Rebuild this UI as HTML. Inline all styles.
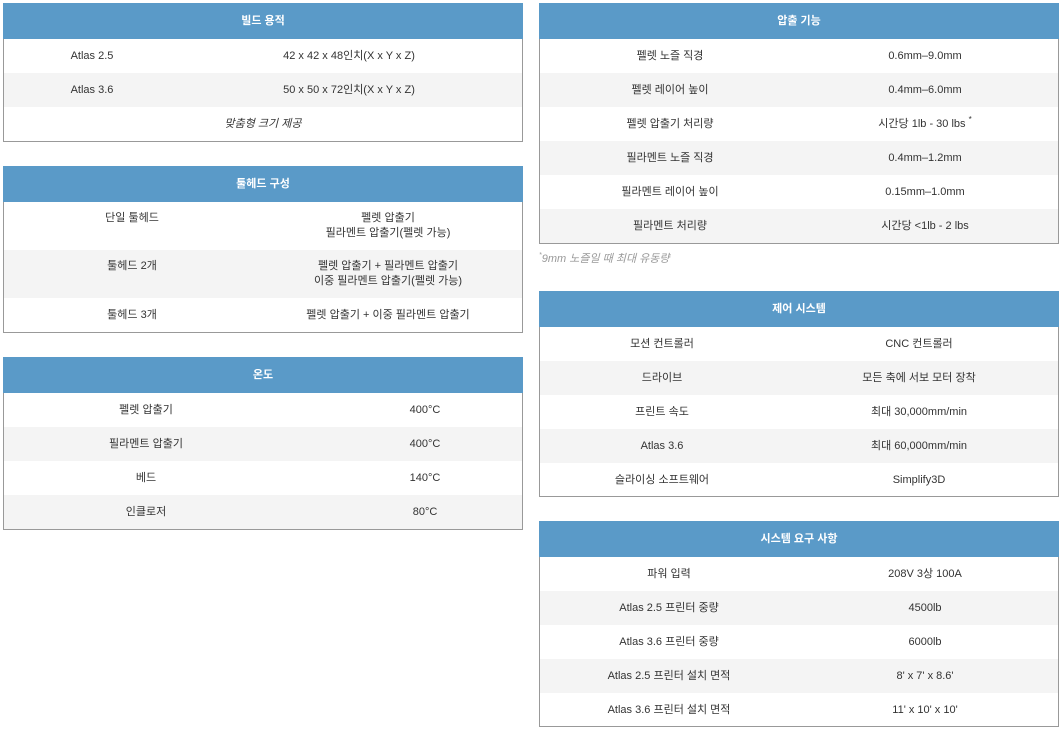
<!DOCTYPE html>
<html><head><meta charset="utf-8"><style>
body{margin:0;width:1062px;height:730px;background:#fff;position:relative;font-family:"Liberation Sans","Noto Sans CJK KR",sans-serif;font-size:11px;color:#333;overflow:hidden}
.t{position:absolute;border:1px solid #999;box-sizing:border-box;background:#fff}
.h{height:36px;background:#5a9ac8;color:#fff;font-weight:bold;text-align:center;line-height:36px;margin:-1px -1px 0 -1px}
.r{position:relative;height:34px}
.r:nth-child(odd){background:#f4f4f4}
.c{position:absolute;width:300px;text-align:center;top:0;line-height:34px;white-space:nowrap}
.tall{height:48px}
.tall .c{line-height:15px;top:9px}
.note{position:absolute;left:539px;top:250px;color:#999;font-style:italic;font-size:11px}
.s{font-size:8px;position:relative;top:-5px;line-height:0}
</style></head><body>

<div class="t" style="left:3px;top:3px;width:520px;height:139px">
<div class="h">빌드 용적</div>
<div class="r"><span class="c" style="left:-62px">Atlas 2.5</span><span class="c" style="left:195px">42 x 42 x 48인치(X x Y x Z)</span></div>
<div class="r"><span class="c" style="left:-62px">Atlas 3.6</span><span class="c" style="left:195px">50 x 50 x 72인치(X x Y x Z)</span></div>
<div class="r"><span class="c" style="left:109px;font-style:italic">맞춤형 크기 제공</span></div>
</div>

<div class="t" style="left:3px;top:166px;width:520px;height:167px">
<div class="h">툴헤드 구성</div>
<div class="r tall"><span class="c" style="left:-22px">단일 툴헤드</span><span class="c" style="left:234px">펠렛 압출기<br>필라멘트 압출기(펠렛 가능)</span></div>
<div class="r tall"><span class="c" style="left:-22px">툴헤드 2개</span><span class="c" style="left:234px">펠렛 압출기 + 필라멘트 압출기<br>이중 필라멘트 압출기(펠렛 가능)</span></div>
<div class="r"><span class="c" style="left:-22px">툴헤드 3개</span><span class="c" style="left:234px">펠렛 압출기 + 이중 필라멘트 압출기</span></div>
</div>

<div class="t" style="left:3px;top:357px;width:520px;height:173px">
<div class="h">온도</div>
<div class="r"><span class="c" style="left:-8px">펠렛 압출기</span><span class="c" style="left:271px">400°C</span></div>
<div class="r"><span class="c" style="left:-8px">필라멘트 압출기</span><span class="c" style="left:271px">400°C</span></div>
<div class="r"><span class="c" style="left:-8px">베드</span><span class="c" style="left:271px">140°C</span></div>
<div class="r"><span class="c" style="left:-8px">인클로저</span><span class="c" style="left:271px">80°C</span></div>
</div>

<div class="t" style="left:539px;top:3px;width:520px;height:241px">
<div class="h">압출 기능</div>
<div class="r"><span class="c" style="left:-20px">펠렛 노즐 직경</span><span class="c" style="left:235px">0.6mm–9.0mm</span></div>
<div class="r"><span class="c" style="left:-20px">펠렛 레이어 높이</span><span class="c" style="left:235px">0.4mm–6.0mm</span></div>
<div class="r"><span class="c" style="left:-20px">펠렛 압출기 처리량</span><span class="c" style="left:235px">시간당 1lb - 30 lbs <span class="s">*</span></span></div>
<div class="r"><span class="c" style="left:-20px">필라멘트 노즐 직경</span><span class="c" style="left:235px">0.4mm–1.2mm</span></div>
<div class="r"><span class="c" style="left:-20px">필라멘트 레이어 높이</span><span class="c" style="left:235px">0.15mm–1.0mm</span></div>
<div class="r"><span class="c" style="left:-20px">필라멘트 처리량</span><span class="c" style="left:235px">시간당 &lt;1lb - 2 lbs</span></div>
</div>
<div class="note"><span class="s" style="font-size:7px">*</span>9mm 노즐일 때 최대 유동량</div>

<div class="t" style="left:539px;top:291px;width:520px;height:206px">
<div class="h">제어 시스템</div>
<div class="r"><span class="c" style="left:-28px">모션 컨트롤러</span><span class="c" style="left:229px">CNC 컨트롤러</span></div>
<div class="r"><span class="c" style="left:-28px">드라이브</span><span class="c" style="left:229px">모든 축에 서보 모터 장착</span></div>
<div class="r"><span class="c" style="left:-28px">프린트 속도</span><span class="c" style="left:229px">최대 30,000mm/min</span></div>
<div class="r"><span class="c" style="left:-28px">Atlas 3.6</span><span class="c" style="left:229px">최대 60,000mm/min</span></div>
<div class="r"><span class="c" style="left:-28px">슬라이싱 소프트웨어</span><span class="c" style="left:229px">Simplify3D</span></div>
</div>

<div class="t" style="left:539px;top:521px;width:520px;height:206px">
<div class="h">시스템 요구 사항</div>
<div class="r"><span class="c" style="left:-21px">파워 입력</span><span class="c" style="left:235px">208V 3상 100A</span></div>
<div class="r"><span class="c" style="left:-21px">Atlas 2.5 프린터 중량</span><span class="c" style="left:235px">4500lb</span></div>
<div class="r"><span class="c" style="left:-21px">Atlas 3.6 프린터 중량</span><span class="c" style="left:235px">6000lb</span></div>
<div class="r"><span class="c" style="left:-21px">Atlas 2.5 프린터 설치 면적</span><span class="c" style="left:235px">8' x 7' x 8.6'</span></div>
<div class="r"><span class="c" style="left:-21px">Atlas 3.6 프린터 설치 면적</span><span class="c" style="left:235px">11' x 10' x 10'</span></div>
</div>

</body></html>
